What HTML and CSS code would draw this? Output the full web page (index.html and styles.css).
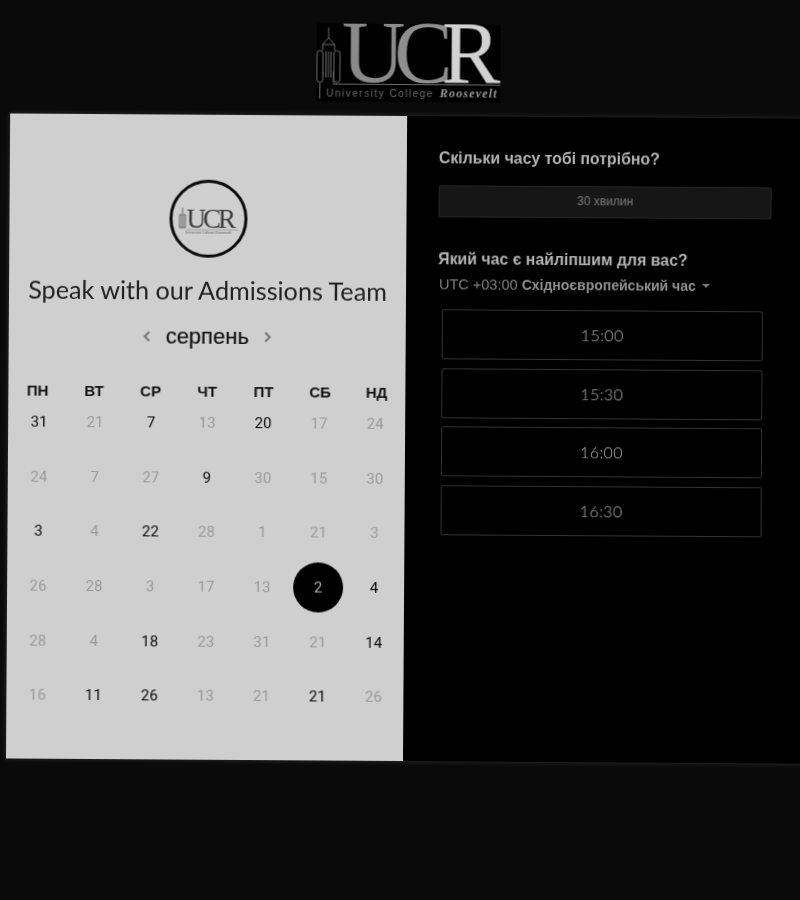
FILE: index.html
```html
<!DOCTYPE html>
<html lang="uk">
<head>
<meta charset="utf-8">
<title>Speak with our Admissions Team</title>
<link rel="stylesheet" href="styles.css">
</head>
<body>
<div class="page">
  <header class="top">
    <svg class="logo" width="184" height="102" viewBox="0 -24 184 102">
      <rect width="184" height="78" fill="#000"/>
      <g fill="none" stroke="#6a6a6a" stroke-width="1">
        <path d="M12 4V14L6 21V27M12 14L18 21V27M6 21H18"/>
        <rect x="0.500" y="27" width="6" height="32" rx="3"/>
        <rect x="17.500" y="27" width="6" height="32" rx="3"/>
        <path d="M6.500 30V50M9.500 28V54M12 28V54M14.500 28V54M17.500 30V50"/>
        <path d="M3.500 59V75M17 48V60.500H184"/>
      </g>
      <text class="logo-serif" x="25" y="58"><tspan fill="#8a8a8a">U</tspan><tspan fill="#8f8f8f">C</tspan><tspan fill="#d2d2d2">R</tspan></text>
      <text class="logo-sub" x="10" y="73" fill="#6c6c6c">University College</text>
      <text class="logo-ital" x="123.500" y="73" fill="#9c9c9c">Roosevelt</text>
    </svg>
  </header>
  <main class="card">
    <section class="left">
      <div class="avatar">
        <svg class="avatar-logo" width="60" height="30" viewBox="0 0 60 30">
          <g fill="none" stroke="#666" stroke-width="1">
            <path d="M4 4V10M1 11H7V24H1Z M3 11V24M5 11V24"/>
            <path d="M8 26H60" stroke="#888" stroke-width=".6"/>
          </g>
          <text class="mini-serif" x="8" y="24" fill="#3a3a3a">UCR</text>
          <text class="mini-sub" x="7" y="30" fill="#555">University College Roosevelt</text>
        </svg>
      </div>
      <h1 class="title">Speak with our Admissions Team</h1>
      <div class="month">
        <svg class="chev" width="8" height="12" viewBox="0 0 8 12"><path d="M6.500 1.500L2 6l4.500 4.500" fill="none" stroke="#777" stroke-width="2"/></svg>
        <span class="month-name">серпень</span>
        <svg class="chev" width="8" height="12" viewBox="0 0 8 12"><path d="M1.500 1.500L6 6l-4.500 4.500" fill="none" stroke="#777" stroke-width="2"/></svg>
      </div>
      <div class="weekdays">
        <span>ПН</span><span>ВТ</span><span>СР</span><span>ЧТ</span><span>ПТ</span><span>СБ</span><span>НД</span>
      </div>
      <div class="days">
        <span class="on">31</span><span>21</span><span class="on">7</span><span>13</span><span class="on">20</span><span>17</span><span>24</span>
        <span>24</span><span>7</span><span>27</span><span class="on">9</span><span>30</span><span>15</span><span>30</span>
        <span class="on">3</span><span>4</span><span class="on">22</span><span>28</span><span>1</span><span>21</span><span>3</span>
        <span>26</span><span>28</span><span>3</span><span>17</span><span>13</span><span><b class="selected">2</b></span><span class="on">4</span>
        <span>28</span><span>4</span><span class="on">18</span><span>23</span><span>31</span><span>21</span><span class="on">14</span>
        <span>16</span><span class="on">11</span><span class="on">26</span><span>13</span><span>21</span><span class="on">21</span><span>26</span>
      </div>
    </section>
    <section class="right">
      <h2 class="question">Скільки часу тобі потрібно?</h2>
      <div class="duration">30 хвилин</div>
      <h2 class="question second">Який час є найліпшим для вас?</h2>
      <div class="zone"><span class="utc">UTC +03:00 </span><b>Східноєвропейський час</b><i class="caret"></i></div>
      <div class="slots">
        <div class="slot">15:00</div>
        <div class="slot">15:30</div>
        <div class="slot">16:00</div>
        <div class="slot">16:30</div>
      </div>
    </section>
  </main>
</div>
</body>
</html>
```
FILE: styles.css
```css
html, body {
  margin: 0;
  height: 900px;
  overflow: hidden;
  background: #0a0a0a;
}
.page {
  width: 800px;
  margin-left: 8px;
  transform-origin: 392px 450px;
  transform: rotate(0.37deg);
  filter: blur(0.35px);
}
.top {
  height: 116px;
  display: flex;
  justify-content: center;
  align-items: flex-start;
}
.logo {
  display: block;
  margin: 0 5px 0 0;
}
.logo-serif {
  font: 88px "Liberation Serif", serif;
  letter-spacing: -11px;
}
.logo-sub {
  font: 10px "Liberation Sans", sans-serif;
  -webkit-text-stroke: .25px #6c6c6c;
  letter-spacing: 1.500px;
}
.logo-ital {
  font: italic bold 12px "Liberation Serif", serif;
  letter-spacing: 1.200px;
}
.mini-serif {
  font: 27px "Liberation Serif", serif;
  letter-spacing: -3px;
}
.mini-sub {
  font: 3.200px "Liberation Sans", sans-serif;
  letter-spacing: .2px;
}
.card {
  display: flex;
  height: 645px;
  width: 820px;
  background: #000;
  box-shadow: 0 0 5px rgba(255, 255, 255, .16);
}
.left {
  width: 397px;
  flex: none;
  background: #cfcfcf;
  padding-top: 65px;
  box-sizing: border-box;
  display: flex;
  flex-direction: column;
  align-items: center;
}
.avatar {
  width: 78px;
  height: 78px;
  box-sizing: border-box;
  border: 3px solid #0a0a0a;
  border-radius: 50%;
  display: flex;
  align-items: center;
  justify-content: center;
}
.avatar-logo {
  display: block;
}
.title {
  margin: 17px 0 0;
  font: 400 25.200px/30px Lato, sans-serif;
  color: #222;
  white-space: nowrap;
}
.month {
  margin-top: 17px;
  display: flex;
  align-items: center;
  gap: 15px;
  height: 30px;
}
.month-name {
  font: 22px/30px "Liberation Sans", sans-serif;
  color: #111;
  -webkit-text-stroke: .2px #111;
}
.chev {
  display: block;
}
.weekdays, .days {
  display: grid;
  align-self: flex-start;
  justify-items: center;
}
.weekdays {
  grid-template-columns: repeat(7, 56.500px);
  margin: 33px 0 0 1px;
  height: 14px;
  align-items: center;
  font: bold 15px/14px "Liberation Sans", sans-serif;
  color: #111;
}
.days {
  grid-template-columns: repeat(7, 56px);
  margin: -3px 0 0 3px;
  grid-auto-rows: 54.600px;
  align-items: center;
  font: 400 15px/20px Roboto, sans-serif;
  color: #9a9a9a;
}
.days .on {
  color: #0a0a0a;
}
.selected {
  width: 50px;
  height: 50px;
  border-radius: 50%;
  background: #000;
  color: #a8a8a8;
  font-weight: 400;
  display: flex;
  align-items: center;
  justify-content: center;
}
.right {
  flex: 1;
  padding: 32px 0 0 32px;
  box-sizing: border-box;
}
.question {
  margin: 0;
  font: bold 15.850px/20px "Liberation Sans", sans-serif;
  color: #b4b4b4;
}
.duration {
  margin-top: 17px;
  width: 333px;
  height: 32px;
  box-sizing: border-box;
  background: #161616;
  border: 1px solid #262626;
  border-radius: 2px;
  font: 12px/29px "Liberation Sans", sans-serif;
  color: #7c7c7c;
  text-align: center;
}
.second {
  margin-top: 32px;
}
.zone {
  margin: 5px 0 0 1px;
  font: 14px/20px "Liberation Sans", sans-serif;
  color: #8c8c8c;
  display: flex;
  align-items: center;
  white-space: pre;
}
.utc {
  font-size: 14.500px;
  color: #808080;
}
.caret {
  margin-left: 6px;
  border: 4px solid transparent;
  border-top-color: #777;
  border-bottom: 0;
}
.zone b {
  color: #8f8f8f;
}
.slots {
  margin: 15px 0 0 4px;
  display: flex;
  flex-direction: column;
  gap: 8.500px;
  width: 321px;
}
.slot {
  height: 50px;
  box-sizing: border-box;
  border: 1px solid #333;
  border-radius: 2px;
  font: 300 16px/48px Lato, sans-serif;
  letter-spacing: .4px;
  color: #b0b0b0;
  text-align: center;
}
```
